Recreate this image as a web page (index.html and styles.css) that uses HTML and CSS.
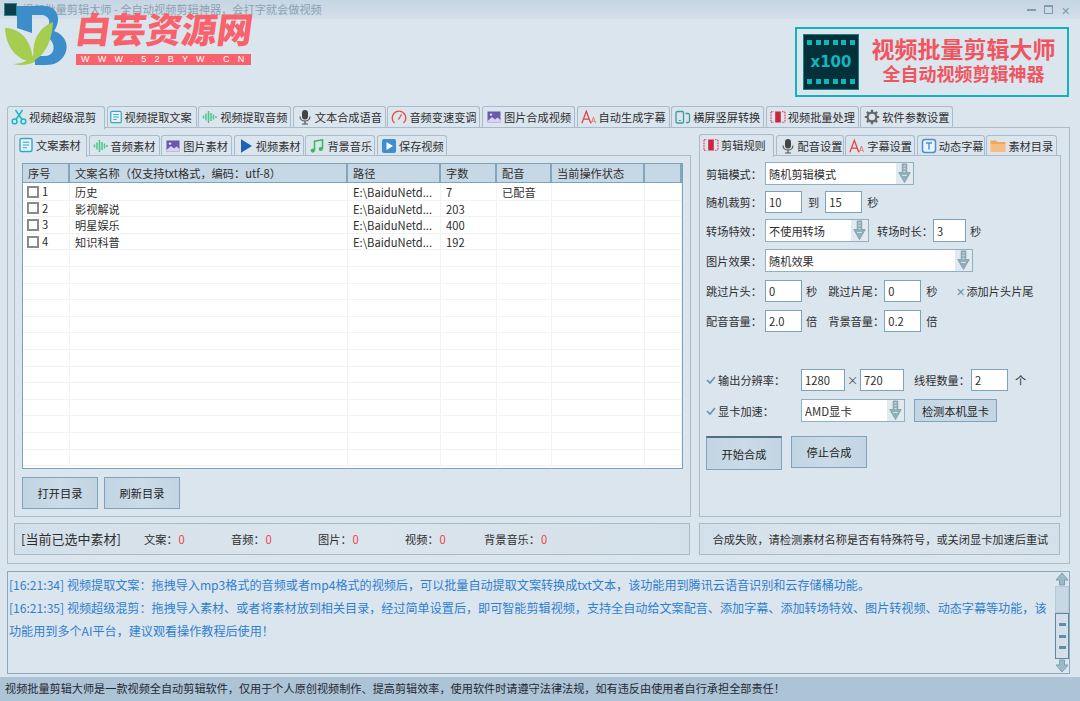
FILE: index.html
```html
<!DOCTYPE html>
<html lang="zh">
<head>
<meta charset="utf-8">
<title>视频批量剪辑大师</title>
<link rel="stylesheet" href="styles.css">
</head>
<body>
<svg class="sprite" width="0" height="0" aria-hidden="true">
  <symbol id="scissors" viewBox="0 0 16 16"><g fill="none" stroke="#1fb5c4" stroke-width="1.5"><circle cx="3.6" cy="12.4" r="2.4"/><circle cx="12.4" cy="12.4" r="2.4"/><path d="M5 10.5 11.5 1M11 10.5 4.5 1"/></g></symbol>
  <symbol id="doc" viewBox="0 0 16 16"><rect x="2" y="1.5" width="12" height="13" rx="1.5" fill="#e8f3f7" stroke="#35a6c4" stroke-width="1.4"/><path d="M4.8 5.2h6.4M4.8 8h6.4M4.8 10.8h4" stroke="#35a6c4" stroke-width="1.1"/></symbol>
  <symbol id="wave" viewBox="0 0 16 16"><path d="M1.5 6.5v3M4 4.5v7M6.5 2v12M9 4v8M11.5 5.5v5M14 7v2" stroke="#4cc48a" stroke-width="1.5" fill="none"/></symbol>
  <symbol id="mic" viewBox="0 0 16 16"><rect x="5" y="1" width="6" height="9.5" rx="3" fill="#444"/><path d="M3 7.5c0 6 10 6 10 0M8 12.5v2.5M5 15h6" stroke="#555" stroke-width="1.2" fill="none"/></symbol>
  <symbol id="gauge" viewBox="0 0 16 16"><path d="M3.5 14A6.8 6.8 0 1 1 12.5 14" fill="none" stroke="#e8503f" stroke-width="1.4"/><path d="M7.5 10.5 10.5 5.5" stroke="#e8503f" stroke-width="1.3"/></symbol>
  <symbol id="image" viewBox="0 0 16 16"><rect x="1.5" y="2.5" width="13" height="11" fill="#6a58ad"/><circle cx="5" cy="5.6" r="1.2" fill="#e6e2f4"/><path d="M1.5 12 6 8l3 2.5 2.5-2 3 2.5v2.5h-13z" fill="#d8d3ee"/></symbol>
  <symbol id="aa" viewBox="0 0 18 16"><path d="M1 15 6 1.5 11 15M2.8 10.5h6.4" fill="none" stroke="#e8403c" stroke-width="1.4"/><path d="M11.5 15 14 8l2.5 7M12.4 12.8h3.2" fill="none" stroke="#e8706c" stroke-width="1"/></symbol>
  <symbol id="rotate" viewBox="0 0 16 16"><rect x="1" y="2.5" width="7.5" height="11.5" rx="1.3" fill="none" stroke="#3d9a9c" stroke-width="1.3"/><path d="M3.8 11.5h2" stroke="#3d9a9c"/><path d="M10.5 4.5h2.5a1.5 1.5 0 0 1 1.5 1.5v6a1.5 1.5 0 0 1-1.5 1.5h-2" fill="none" stroke="#3d9a9c" stroke-width="1.3"/></symbol>
  <symbol id="film" viewBox="0 0 16 16"><rect x="5.2" y="2.5" width="5.6" height="11" fill="#c9263f"/><path d="M1 3v10M15 3v10" stroke="#d8425a" stroke-width="1.2" stroke-dasharray="1.6 1" fill="none"/><path d="M1 2.7h3M1 13.3h3M12 2.7h3M12 13.3h3" stroke="#d8425a" stroke-dasharray="1.6 1"/></symbol>
  <symbol id="gear" viewBox="0 0 16 16"><circle cx="8" cy="8" r="4.4" fill="none" stroke="#666" stroke-width="2.2"/><path d="M8 .8v3M8 12.2v3M.8 8h3M12.2 8h3M2.9 2.9 5 5M11 11l2.1 2.1M13.1 2.9 11 5M5 11l-2.1 2.1" stroke="#666" stroke-width="2.2"/></symbol>
  <symbol id="play" viewBox="0 0 16 16"><path d="M3 1.2 14 8 3 14.8z" fill="#1d63b5"/></symbol>
  <symbol id="music" viewBox="0 0 16 16"><path d="M5.5 12.5V3.2L13.5 1.8v9" fill="none" stroke="#3fb55a" stroke-width="1.5"/><circle cx="3.8" cy="12.6" r="2.1" fill="#3fb55a"/><circle cx="11.8" cy="11" r="2.1" fill="#3fb55a"/></symbol>
  <symbol id="playbox" viewBox="0 0 16 16"><rect x="1" y="1" width="14" height="14" rx="2" fill="#3d8fd0"/><path d="M5.5 4 12 8l-6.5 4z" fill="#fff"/></symbol>
  <symbol id="tbox" viewBox="0 0 16 16"><rect x="1.5" y="1.5" width="13" height="13" rx="2.5" fill="#eaf3fb" stroke="#4b8fd0" stroke-width="1.5"/><path d="M5 5h6M8 5v6.5" stroke="#4b8fd0" stroke-width="1.4"/></symbol>
  <symbol id="folder" viewBox="0 0 16 16"><path d="M.5 2.5h5.5l1.5 1.5h8v2H.5z" fill="#f2a65a"/><path d="M.5 6h15v8H.5z" fill="#f6bd80"/></symbol>
  <symbol id="down" viewBox="0 0 14 22"><path d="M4.6 1h4.8v9h3.6L7 20.5 1 10h3.6z" fill="#8fb0ba" stroke="#7d98a4" stroke-width=".8"/><path d="M6 3h2M6 6h2M6 9h2M4.6 13h4.8" stroke="#dfe8ec" stroke-width="1"/></symbol>
  <symbol id="check" viewBox="0 0 10 10"><path d="M1 5l3 3 5-6" fill="none" stroke="#5f93ad" stroke-width="1.6"/></symbol>
</svg>

<div class="app">
  <div class="titlebar">
    <div class="app-icon"></div>
    <div class="app-title">视频批量剪辑大师 - 全自动视频剪辑神器，会打字就会做视频</div>
    <div class="win-ctrl">
      <span class="wc-min"></span><span class="wc-max"></span><span class="wc-close">✕</span>
    </div>
  </div>

  <div class="watermark">
    <svg class="wm-mark" viewBox="0 0 70 70" aria-hidden="true">
      <path d="M17 6H44C58 6 62 20 54 31C66 35 69 46 65 54C61 62 54 65 46 65H35V56H45C52 56 55 50 53 44C51 38 46 36 42 36V29C48 29 50 24 49 20C48 17 45 15 41 15H32V33L17 28Z" fill="#3b8ec9"/>
      <path d="M5 28C18 28 32 38 33 62C15 60 6 46 5 28Z" fill="#a6cd4f"/>
      <path d="M53 22C52 42 44 56 34 60C31 42 38 28 53 22Z" fill="#a6cd4f"/>
      <path d="M13 64C22 64 30 60 34 54L35 62C28 65 20 66 13 64Z" fill="#a6cd4f"/>
    </svg>
    <div class="wm-text">
      <div class="wm-name">白芸资源网</div>
      <div class="wm-url">WWW.52BYW.CN</div>
    </div>
  </div>

  <div class="header">
    <div class="banner">
      <div class="film">
        <div class="film-holes"><i></i><i></i><i></i><i></i><i></i><i></i></div>
        <div class="film-label">x100</div>
        <div class="film-holes"><i></i><i></i><i></i><i></i><i></i><i></i></div>
      </div>
      <div class="banner-text">
        <div class="banner-title">视频批量剪辑大师</div>
        <div class="banner-sub">全自动视频剪辑神器</div>
      </div>
    </div>
  </div>

  <div class="tabs tabs-main">
    <div class="tab active w98"><svg class="ico"><use href="#scissors"/></svg>视频超级混剪</div>
    <div class="tab w90 tab-tight"><svg class="ico"><use href="#doc"/></svg>视频提取文案</div>
    <div class="tab w93"><svg class="ico"><use href="#wave"/></svg>视频提取音频</div>
    <div class="tab w93"><svg class="ico"><use href="#mic"/></svg>文本合成语音</div>
    <div class="tab w93"><svg class="ico"><use href="#gauge"/></svg>音频变速变调</div>
    <div class="tab w93"><svg class="ico"><use href="#image"/></svg>图片合成视频</div>
    <div class="tab w93"><svg class="ico"><use href="#aa"/></svg>自动生成字幕</div>
    <div class="tab w93"><svg class="ico"><use href="#rotate"/></svg>横屏竖屏转换</div>
    <div class="tab w93"><svg class="ico"><use href="#film"/></svg>视频批量处理</div>
    <div class="tab w93"><svg class="ico"><use href="#gear"/></svg>软件参数设置</div>
  </div>

  <div class="main-pane">
    <div class="col-left">
      <div class="tabs tabs-sub">
        <div class="tab active w73"><svg class="ico"><use href="#doc"/></svg>文案素材</div>
        <div class="tab w71"><svg class="ico"><use href="#wave"/></svg>音频素材</div>
        <div class="tab w71"><svg class="ico"><use href="#image"/></svg>图片素材</div>
        <div class="tab w70"><svg class="ico"><use href="#play"/></svg>视频素材</div>
        <div class="tab w70"><svg class="ico"><use href="#music"/></svg>背景音乐</div>
        <div class="tab w70"><svg class="ico"><use href="#playbox"/></svg>保存视频</div>
      </div>
      <div class="sub-pane left-pane">
        <div class="table">
          <div class="tr th"><div>序号</div><div>文案名称（仅支持txt格式，编码：utf-8）</div><div>路径</div><div>字数</div><div>配音</div><div>当前操作状态</div><div></div></div>
          <div class="tr"><div class="idx"><span class="cb"></span>1</div><div>历史</div><div>E:\BaiduNetd...</div><div>7</div><div>已配音</div><div></div><div></div></div>
          <div class="tr"><div class="idx"><span class="cb"></span>2</div><div>影视解说</div><div>E:\BaiduNetd...</div><div>203</div><div></div><div></div><div></div></div>
          <div class="tr"><div class="idx"><span class="cb"></span>3</div><div>明星娱乐</div><div>E:\BaiduNetd...</div><div>400</div><div></div><div></div><div></div></div>
          <div class="tr"><div class="idx"><span class="cb"></span>4</div><div>知识科普</div><div>E:\BaiduNetd...</div><div>192</div><div></div><div></div><div></div></div>
          <div class="tr"><div></div><div></div><div></div><div></div><div></div><div></div><div></div></div>
          <div class="tr"><div></div><div></div><div></div><div></div><div></div><div></div><div></div></div>
          <div class="tr"><div></div><div></div><div></div><div></div><div></div><div></div><div></div></div>
          <div class="tr"><div></div><div></div><div></div><div></div><div></div><div></div><div></div></div>
          <div class="tr"><div></div><div></div><div></div><div></div><div></div><div></div><div></div></div>
          <div class="tr"><div></div><div></div><div></div><div></div><div></div><div></div><div></div></div>
          <div class="tr"><div></div><div></div><div></div><div></div><div></div><div></div><div></div></div>
          <div class="tr"><div></div><div></div><div></div><div></div><div></div><div></div><div></div></div>
          <div class="tr"><div></div><div></div><div></div><div></div><div></div><div></div><div></div></div>
          <div class="tr"><div></div><div></div><div></div><div></div><div></div><div></div><div></div></div>
          <div class="tr"><div></div><div></div><div></div><div></div><div></div><div></div><div></div></div>
          <div class="tr"><div></div><div></div><div></div><div></div><div></div><div></div><div></div></div>
          <div class="tr"><div></div><div></div><div></div><div></div><div></div><div></div><div></div></div>
        </div>
        <div class="btn-row">
          <div class="btn btn-lg">打开目录</div>
          <div class="btn btn-lg">刷新目录</div>
        </div>
      </div>
      <div class="status-box stats">
        <div class="stat-head">[当前已选中素材]</div>
        <div class="stat">文案：<b>0</b></div>
        <div class="stat">音频：<b>0</b></div>
        <div class="stat">图片：<b>0</b></div>
        <div class="stat stat-narrow">视频：<b>0</b></div>
        <div class="stat stat-last">背景音乐：<b>0</b></div>
      </div>
    </div>

    <div class="col-right">
      <div class="tabs tabs-sub">
        <div class="tab active w75"><svg class="ico"><use href="#film"/></svg>剪辑规则</div>
        <div class="tab w68"><svg class="ico"><use href="#mic"/></svg>配音设置</div>
        <div class="tab w70"><svg class="ico"><use href="#aa"/></svg>字幕设置</div>
        <div class="tab w68"><svg class="ico"><use href="#tbox"/></svg>动态字幕</div>
        <div class="tab w71"><svg class="ico"><use href="#folder"/></svg>素材目录</div>
      </div>
      <div class="sub-pane right-pane">
        <div class="row h23">
          <span class="lbl">剪辑模式：</span>
          <div class="combo w149">随机剪辑模式<svg class="arrow"><use href="#down"/></svg></div>
        </div>
        <div class="row h22 m6">
          <span class="lbl">随机裁剪：</span>
          <div class="input w37">10</div><span class="u m-l6">到</span><div class="input w37 m-l6">15</div><span class="u m-l5">秒</span>
        </div>
        <div class="row h23 m6">
          <span class="lbl">转场特效：</span>
          <div class="combo w104">不使用转场<svg class="arrow"><use href="#down"/></svg></div>
          <span class="u m-l8">转场时长：</span><div class="input w33">3</div><span class="u m-l4">秒</span>
        </div>
        <div class="row h23 m7">
          <span class="lbl">图片效果：</span>
          <div class="combo w208">随机效果<svg class="arrow"><use href="#down"/></svg></div>
        </div>
        <div class="row h22 m8">
          <span class="lbl">跳过片头：</span>
          <div class="input w37">0</div><span class="u m-l4">秒</span>
          <span class="u lbl2">跳过片尾：</span><div class="input w37">0</div><span class="u m-l5">秒</span>
          <span class="u m-l19 mark">✕</span><span class="u">添加片头片尾</span>
        </div>
        <div class="row h22 m8">
          <span class="lbl">配音音量：</span>
          <div class="input w37">2.0</div><span class="u m-l4">倍</span>
          <span class="u lbl2">背景音量：</span><div class="input w37">0.2</div><span class="u m-l5">倍</span>
        </div>
        <div class="row h22 m37">
          <svg class="chk"><use href="#check"/></svg><span class="lbl3">输出分辨率：</span>
          <div class="input w44">1280</div><span class="u times">×</span><div class="input w44">720</div>
          <span class="u m-l10">线程数量：</span><div class="input w37 m-l1">2</div><span class="u m-l7">个</span>
        </div>
        <div class="row h23 m8">
          <svg class="chk"><use href="#check"/></svg><span class="lbl3">显卡加速：</span>
          <div class="combo w104 gpu">AMD显卡<svg class="arrow"><use href="#down"/></svg></div>
          <div class="btn btn-sm m-l9">检测本机显卡</div>
        </div>
        <div class="row m14 btn-row2">
          <div class="btn btn-lg pressed">开始合成</div>
          <div class="btn btn-lg">停止合成</div>
        </div>
      </div>
      <div class="status-box msg">合成失败，请检测素材名称是否有特殊符号，或关闭显卡加速后重试</div>
    </div>
  </div>

  <div class="log">
    <div class="log-text">
      <p>[16:21:34] 视频提取文案：拖拽导入mp3格式的音频或者mp4格式的视频后，可以批量自动提取文案转换成txt文本，该功能用到腾讯云语音识别和云存储桶功能。</p>
      <p>[16:21:35] 视频超级混剪：拖拽导入素材、或者将素材放到相关目录，经过简单设置后，即可智能剪辑视频，支持全自动给文案配音、添加字幕、添加转场特效、图片转视频、动态字幕等功能，该功能用到多个AI平台，建议观看操作教程后使用！</p>
    </div>
    <div class="scrollbar">
      <svg class="sb-arrow" viewBox="0 0 14 14"><path d="M7 1 13 8H9.5v5h-5V8H1z" fill="#9db9c6" stroke="#7e9fb0"/></svg>
      <div class="sb-track"></div>
      <div class="sb-thumb"><i></i><i></i><i></i></div>
      <svg class="sb-arrow" viewBox="0 0 14 14"><path d="M7 13 1 6h3.5V1h5v5H13z" fill="#9db9c6" stroke="#7e9fb0"/></svg>
    </div>
  </div>

  <div class="statusbar">视频批量剪辑大师是一款视频全自动剪辑软件，仅用于个人原创视频制作、提高剪辑效率，使用软件时请遵守法律法规，如有违反由使用者自行承担全部责任！</div>
</div>
</body>
</html>
```

FILE: styles.css
```css
* { box-sizing: border-box; }
html, body { margin: 0; padding: 0; }
body {
  width: 1080px;
  height: 701px;
  overflow: hidden;
  background: #dbe5ee;
  color: #2e2e2e;
  font-family: "Noto Sans CJK SC", "Noto Sans", sans-serif;
  font-size: 11.2px;
}
.sprite { position: absolute; }
.app { position: relative; width: 1080px; height: 701px; display: flex; flex-direction: column; }

/* title bar */
.titlebar {
  height: 19px;
  flex: none;
  display: flex;
  align-items: center;
  padding: 0 10px 0 4px;
  background: linear-gradient(#c6d6e3, #cfdce7 70%, #d3dfe9);
}
.app-icon { width: 13px; height: 13px; background: #0d3f4a; border: 1px solid #2a8a94; }
.app-title { margin-left: 5px; margin-top: -2px; font-size: 11.2px; color: #8ba2b3; }
.win-ctrl { margin-left: auto; display: flex; align-items: center; gap: 8px; }
.wc-min { width: 9px; height: 2px; background: #7d9cb0; }
.wc-max { width: 9px; height: 9px; border: 1px solid #7d9cb0; border-top-width: 2px; }
.wc-close { font-size: 11px; line-height: 12px; color: #7d9cb0; }

/* watermark overlay */
.watermark { position: absolute; left: 0; top: 0; display: flex; align-items: flex-start; }
.wm-mark { width: 70px; height: 70px; flex: none; }
.wm-text { margin-left: 6px; display: flex; flex-direction: column; }
.wm-name {
  width: 175px;
  margin-top: 10px;
  font-size: 35.4px;
  line-height: 36px;
  font-weight: 900;
  color: #f7626c;
  white-space: nowrap;
  transform: skewX(-8deg);
}
.wm-url {
  width: 175px;
  height: 11px;
  margin-top: 8px;
  background: #f7626c;
  color: #fff;
  font-family: "Liberation Sans", sans-serif;
  font-size: 9px;
  line-height: 11px;
  letter-spacing: 8.2px;
  padding-left: 5px;
  white-space: nowrap;
}

/* header */
.header { height: 86px; flex: none; padding: 8px 11px 0 0; display: flex; justify-content: flex-end; }
.banner {
  width: 274px;
  height: 70px;
  border: 2px solid #15b2bb;
  padding: 5px 6px;
  display: flex;
  align-items: center;
}
.film {
  width: 56px;
  height: 56px;
  flex: none;
  background: #04303a;
  border: 1px solid #14808a;
  display: flex;
  flex-direction: column;
  justify-content: space-between;
  align-items: center;
  padding: 5px 3px;
}
.film-holes { width: 100%; display: flex; justify-content: space-between; }
.film-holes i { width: 5px; height: 5px; background: #14b4bf; }
.film-label { color: #14b4bf; font-family: "DejaVu Sans", sans-serif; font-size: 15px; font-weight: 700; line-height: 18px; }
.banner-text { flex: 1; display: flex; flex-direction: column; align-items: center; margin: -4px 0 0 7px; }
.banner-title { font-size: 23px; line-height: 27px; font-weight: 700; color: #f0555f; white-space: nowrap; }
.banner-sub { font-size: 18px; line-height: 23px; font-weight: 700; color: #f0555f; white-space: nowrap; }

/* tabs */
.tabs { display: flex; align-items: flex-end; }
.tabs-main { height: 22px; flex: none; padding-left: 7px; gap: 1.6px; position: relative; z-index: 1; }
.tabs-sub { height: 21px; flex: none; gap: 1.6px; position: relative; z-index: 1; }
.tab {
  height: 21px;
  display: flex;
  align-items: center;
  gap: 2px;
  padding: 0 0 1px 3px;
  white-space: nowrap;
  background: #dbe5ee;
  border: 1.5px solid #aabcc9;
  border-bottom-width: 0;
  border-radius: 3px 3px 0 0;
}
.tabs-sub .tab { height: 20px; padding-bottom: 0; }
.tab.active, .tabs-sub .tab.active { height: 23px; margin-bottom: -1.5px; padding-bottom: 1.5px; }
.tab-tight { padding-left: 1px; }
.tab-tight .ico { width: 14px; }
.ico { width: 16px; height: 16px; flex: none; }
.w68 { width: 68px; } .w70 { width: 70px; } .w71 { width: 71px; } .w73 { width: 73px; } .w75 { width: 75px; }
.w90 { width: 90px; } .w93 { width: 93px; } .w98 { width: 98px; }

.main-pane {
  flex: none;
  height: 437px;
  margin: 0 10px 0 7px;
  padding: 6px 7px 0 6px;
  border: 1.5px solid #aabcc9;
  display: flex;
  gap: 8px;
}
.col-left { width: 677px; flex: none; }
.col-right { width: 362px; flex: none; }
.sub-pane { height: 362px; border: 1.5px solid #aabcc9; }

/* table */
.left-pane { padding: 7px 7px 0 7px; }
.table { height: 306px; background: #fff; border: 1.5px solid #7ba3ba; overflow: hidden; }
.tr {
  display: grid;
  grid-template-columns: 47px 278px 93px 56px 55px 93px 1fr;
  height: 16.6px;
  line-height: 17px;
  border-bottom: 1px solid #f0f2f4;
}
.tr > div { padding-left: 5px; border-right: 1px solid #f0f2f4; white-space: nowrap; overflow: hidden; }
.tr.th { height: 18.5px; line-height: 18px; margin-bottom: 1.5px; background: #c6d8e5; border-bottom: 1.5px solid #7ba3ba; }
.tr.th > div { border-right: 2px solid #82a7bd; }
.tr > .idx { display: flex; align-items: center; padding-left: 4px; gap: 3px; }
.cb { width: 12px; height: 12px; border: 2px solid #8a8a8a; background: #fff; flex: none; }

/* buttons */
.btn-row { display: flex; gap: 6px; margin-top: 8px; }
.btn {
  display: flex;
  align-items: center;
  justify-content: center;
  background: linear-gradient(90deg, #c2d5e2, #cbdbe7 50%, #c2d5e2);
  border: 1.5px solid #7fa3ba;
  color: #222;
}
.btn-lg { width: 76px; height: 32px; }
.btn-sm { width: 83px; height: 23px; }
.pressed { border-top: 2px solid #51707f; height: 34px; }

/* status boxes */
.status-box {
  height: 32px;
  margin-top: 6px;
  padding-bottom: 1px;
  border: 1.5px solid #a7bbc8;
  display: flex;
  align-items: center;
  background: linear-gradient(90deg, #d4e0e9, #dbe5ee 50%, #d4e0e9);
}
.stats { width: 676px; padding-left: 6px; }
.stat-head { width: 123px; font-size: 13px; }
.stat { width: 87px; }
.stat-narrow { width: 79px; }
.stat-last { width: 80px; }
.stat b { margin-left: 1px; color: #f0404c; font-weight: 400; }
.msg { width: 361px; justify-content: center; padding-left: 2px; }

/* right form */
.right-pane { padding: 6px 0 0 6px; }
.row { display: flex; align-items: center; white-space: nowrap; }
.h22 { height: 22px; } .h23 { height: 23px; }
.lbl { width: 59px; flex: none; }
.lbl2 { margin-left: 11px; width: 56px; flex: none; }
.lbl3 { width: 83px; flex: none; }
.chk { width: 10px; height: 10px; margin: 0 2px 0 0; flex: none; }
.input {
  height: 100%;
  background: #fff;
  border: 1.3px solid #7ba3ba;
  padding-left: 3px;
  display: flex;
  align-items: center;
  flex: none;
}
.combo {
  height: 100%;
  background: #fff;
  border: 1.3px solid #8eb0c4;
  padding-left: 3px;
  display: flex;
  align-items: center;
  justify-content: space-between;
  flex: none;
}
.arrow { width: 17px; height: 100%; padding: 0; background: #e2eaef; flex: none; }
.gpu { font-size: 11.4px; }
.w33 { width: 33px; } .w37 { width: 37px; } .w44 { width: 44px; } .w104 { width: 104px; } .w149 { width: 149px; } .w208 { width: 208px; }
.m6 { margin-top: 6px; } .m7 { margin-top: 7px; } .m8 { margin-top: 8px; } .m14 { margin-top: 14px; } .m37 { margin-top: 37px; }
.m-l1 { margin-left: 1px; } .m-l4 { margin-left: 4px; } .m-l5 { margin-left: 5px; } .m-l6 { margin-left: 6px; } .m-l7 { margin-left: 7px; } .m-l8 { margin-left: 8px; } .m-l9 { margin-left: 9px; } .m-l10 { margin-left: 10px; } .m-l19 { margin-left: 19px; }
.mark { color: #5f93ad; margin-right: 1px; }
.times { width: 15px; text-align: center; color: #555; }
.btn-row2 { gap: 9px; align-items: flex-start; }

/* log */
.log {
  flex: none;
  height: 103px;
  margin: 7px 10px 0 7px;
  border: 1.3px solid #8aa9bd;
  display: flex;
  position: relative;
}
.log-text { flex: 1; padding: 1px 6px 0 1px; color: #2f7fce; line-height: 23px; font-size: 12.1px; }
.log-text p { margin: 0; }
.scrollbar { width: 14px; flex: none; display: flex; flex-direction: column; }
.sb-arrow { width: 14px; height: 14px; flex: none; }
.sb-track { height: 27px; flex: none; background: #c7d8e4; border: 1px solid #b6c9d6; }
.sb-thumb {
  flex: 1;
  background: #d4e0e9;
  border: 1.3px solid #5f889f;
  display: flex;
  flex-direction: column;
  align-items: center;
  justify-content: space-evenly;
}
.sb-thumb i { width: 7px; height: 3px; background: #5f8ea6; }

/* status bar */
.statusbar {
  flex: 1;
  margin-top: 3px;
  padding: 2px 0 0 5px;
  background: #adc3d6;
  color: #1f2a33;
  font-size: 11.15px;
  line-height: 18px;
  white-space: nowrap;
}
```
